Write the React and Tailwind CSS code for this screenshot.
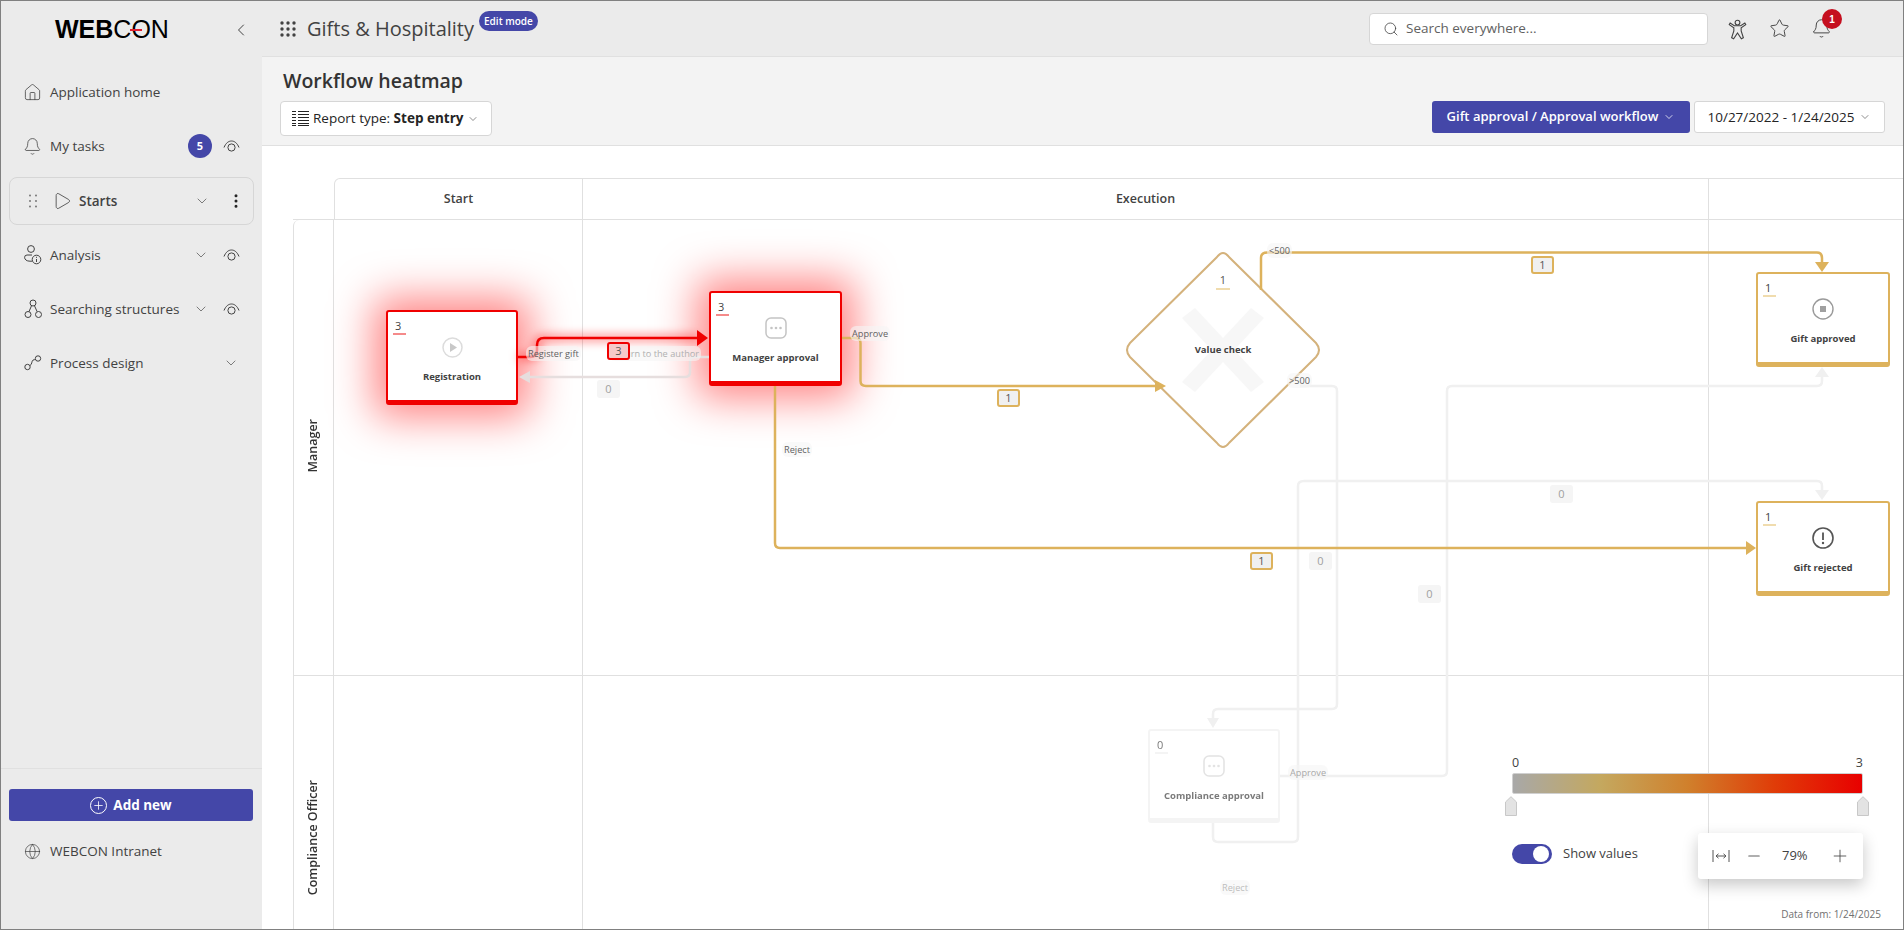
import React from "react";
import { House, Bell, Play, ChevronDown, ChevronLeft, EllipsisVertical, Search, Star, Globe, Plus, Minus } from "lucide-react";

function EyeIcon() {
  return (
    <svg width="17" height="13" viewBox="0 0 17 13" fill="none" stroke="#424242" strokeWidth="1" className="shrink-0">
      <path d="M1 7.5C2.8 3 5.6 1 8.5 1S14.2 3 16 7.5" />
      <circle cx="8.5" cy="7.5" r="3.6" />
    </svg>
  );
}

function AnalysisIcon() {
  return (
    <svg width="18" height="20" viewBox="0 0 18 20" fill="none" stroke="#424242" strokeWidth="1" className="shrink-0">
      <circle cx="7" cy="4" r="3.4" />
      <path d="M8 10H3a2.4 2.4 0 0 0-2.4 2.4c0 2.2 2 3.8 5.4 3.8h2" />
      <circle cx="12.5" cy="14.5" r="4.3" />
      <path d="M12.5 14v3M12.5 11.8v1" />
    </svg>
  );
}

function TreeIcon() {
  return (
    <svg width="18" height="20" viewBox="0 0 18 20" fill="none" stroke="#424242" strokeWidth="1" className="shrink-0">
      <circle cx="9" cy="4" r="3" />
      <circle cx="4" cy="15.5" r="3" />
      <circle cx="14.5" cy="15.5" r="3" />
      <path d="M7.5 6.8 5 12.6M10.5 6.8l2.6 5.8" />
    </svg>
  );
}

function ProcessIcon() {
  return (
    <svg width="18" height="16" viewBox="0 0 18 16" fill="none" stroke="#424242" strokeWidth="1" className="shrink-0">
      <circle cx="3.5" cy="12" r="2.7" />
      <circle cx="14" cy="3.5" r="2.7" />
      <path d="M6 10.5c2-.6 1.6-4.6 3-5.4 1-.5 1.6-.4 2.4-.6" />
    </svg>
  );
}

function DotsGrid({ size, r, color }) {
  const p = [2, 8, 14];
  return (
    <svg width={size} height={size} viewBox="0 0 16 16" fill={color} className="shrink-0">
      {p.map((y) => p.map((x) => <circle key={x + "-" + y} cx={x} cy={y} r={r} />))}
    </svg>
  );
}

function DragDots() {
  return (
    <svg width="8" height="14" viewBox="0 0 8 14" fill="#6b6b6b" className="shrink-0">
      {[1.5, 7, 12.5].map((y) => [1, 7].map((x) => <circle key={x + "-" + y} cx={x} cy={y} r={0.9} />))}
    </svg>
  );
}

function NavRow({ icon, label, right }) {
  return (
    <div className="flex h-[54px] items-center pr-[22px] pl-[22px]">
      <span className="flex w-[19px] justify-center">{icon}</span>
      <span className="ml-[8px] flex-1 text-[13.5px] text-[#424242]">{label}</span>
      {right}
    </div>
  );
}

function Label({ className, children }) {
  return (
    <span className={"absolute rounded-md bg-[#f5f5f5]/60 px-[2px] text-[9.2px] leading-[15px] whitespace-nowrap text-[#616161] " + className}>
      {children}
    </span>
  );
}

function Count({ className, children }) {
  return (
    <span className={"absolute flex h-[18px] w-[23px] items-center justify-center rounded-[3px] text-[11px] text-[#555] " + className}>
      {children}
    </span>
  );
}

function Node({ className, underline, num, icon, label }) {
  return (
    <div className={"absolute flex flex-col items-center rounded-[3px] bg-white " + className}>
      <span className="absolute top-[6px] left-[7px] text-[11px] leading-[15px] text-[#424242]">{num}</span>
      <span className={"absolute top-[21px] left-[5px] h-[2px] w-[13px] " + underline}></span>
      <span className="mt-[24px] flex h-[22px] items-center">{icon}</span>
      <span className="mt-[12px] text-[9.5px] leading-[14px] font-bold whitespace-nowrap text-[#424242]">{label}</span>
    </div>
  );
}

function Dots3({ color }) {
  return (
    <svg width="22" height="22" viewBox="0 0 22 22" fill="none">
      <rect x="1" y="1" width="20" height="20" rx="5" stroke={color} strokeWidth="1.5" />
      <circle cx="6.5" cy="11" r="1.3" fill={color} />
      <circle cx="11" cy="11" r="1.3" fill={color} />
      <circle cx="15.5" cy="11" r="1.3" fill={color} />
    </svg>
  );
}

function Flow() {
  const gold = "#ddb25c";
  const grey = "#f0f0f0";
  return (
    <svg className="absolute top-0 left-0" width="1641" height="783" viewBox="262 146 1641 783" fill="none">
      <defs>
        <filter id="glow" x="-20%" y="-200%" width="140%" height="500%">
          <feGaussianBlur stdDeviation="5" />
        </filter>
      </defs>
      <g stroke={grey} strokeWidth="2.5">
        <path d="M1300 386H1332Q1337 386 1337 391V704Q1337 709 1332 709H1218Q1213 709 1213 714V720" />
        <path d="M1280 776H1442Q1447 776 1447 771V391Q1447 386 1452 386H1817Q1822 386 1822 381V376" />
        <path d="M1213 823V837Q1213 842 1218 842H1293Q1298 842 1298 837V486Q1298 481 1304 481H1817Q1822 481 1822 486V490" />
        <path d="M709 357H695Q690 357 690 362V372Q690 377 685 377H530" stroke="#e6dede" />
      </g>
      <g fill={grey}>
        <polygon points="1207,718 1219,718 1213,728" />
        <polygon points="1815,377 1829,377 1822,367" />
        <polygon points="1815,490 1829,490 1822,500" />
        <polygon points="530,371 530,383 519,377" fill="#e6dede" />
      </g>
      <path
        d="M1217 257Q1223 249 1229 257L1316 343Q1322 350 1316 357L1229 443Q1223 451 1217 443L1130 357Q1124 350 1130 343Z"
        fill="white"
        stroke="#d4b27c"
        strokeWidth="2"
      />
      <polygon points="1182,318 1195,308 1264,382 1251,392" fill="#f7f7f7" />
      <polygon points="1264,318 1251,308 1182,382 1195,392" fill="#f7f7f7" />
      <g stroke={gold} strokeWidth="2.5">
        <path d="M842 338H855Q860.5 338 860.5 343V381Q860.5 386 866 386H1157" />
        <path d="M775 386V543Q775 548 780 548H1747" />
        <path d="M1261 290V258Q1261 252.5 1267 252.5H1817Q1822 252.5 1822 258V262" />
      </g>
      <g fill={gold}>
        <polygon points="1155,380 1166,386 1155,392" />
        <polygon points="1746,541 1756,548 1746,555" />
        <polygon points="1815,262 1829,262 1822,272" />
      </g>
      <path d="M518 357H530Q537 357 537 350V345Q537 338 544 338H698" stroke="#ff0000" strokeOpacity="0.45" strokeWidth="7" filter="url(#glow)" />
      <path d="M518 357H530Q537 357 537 350V345Q537 338 544 338H698" stroke="#f00000" strokeWidth="2.5" />
      <polygon points="697,330 708,338 697,346" fill="#f00000" />
    </svg>
  );
}

export default function App() {
  return (
    <div className="flex h-[930px] w-[1904px] overflow-hidden border border-[#808080] bg-white font-['Open_Sans',sans-serif]">
      <aside className="flex w-[261px] shrink-0 flex-col bg-[#ebebeb]">
        <div className="relative flex h-[56px] items-center pl-[54px]">
          <span className="relative font-['Liberation_Sans',sans-serif] text-[25px] leading-none font-bold text-black">
            WEB<span className="font-normal">CON</span>
            <span className="absolute top-[12px] left-[75px] h-[2px] w-[12px] bg-[#e01f2d]"></span>
          </span>
          <ChevronLeft size={20} strokeWidth={1.2} color="#424242" className="absolute top-[19px] left-[230px]" />
        </div>
        <nav className="mt-[8px] flex flex-1 flex-col">
          <NavRow icon={<House size={19} strokeWidth={1} color="#424242" />} label="Application home" />
          <NavRow
            icon={<Bell size={19} strokeWidth={1} color="#424242" />}
            label="My tasks"
            right={
              <>
                <span className="flex h-[24px] w-[24px] items-center justify-center rounded-full bg-[#4447a8] text-[11px] font-bold text-white">5</span>
                <span className="ml-[11px]"><EyeIcon /></span>
              </>
            }
          />
          <div className="mx-[8px] mt-[4px] flex h-[48px] items-center rounded-[8px] border border-[#d6d6d6] pr-[8px] pl-[19px]">
            <DragDots />
            <Play size={20} strokeWidth={1} color="#424242" className="ml-[15px]" />
            <span className="ml-[7px] flex-1 text-[13.5px] font-semibold text-[#424242]">Starts</span>
            <ChevronDown size={16} strokeWidth={1} color="#424242" />
            <EllipsisVertical size={18} strokeWidth={2} color="#242424" className="ml-[17px]" />
          </div>
          <div className="h-[3px]"></div>
          <NavRow
            icon={<AnalysisIcon />}
            label="Analysis"
            right={<><ChevronDown size={16} strokeWidth={1} color="#424242" /><span className="ml-[14px]"><EyeIcon /></span></>}
          />
          <NavRow
            icon={<TreeIcon />}
            label="Searching structures"
            right={<><ChevronDown size={16} strokeWidth={1} color="#424242" /><span className="ml-[14px]"><EyeIcon /></span></>}
          />
          <NavRow
            icon={<ProcessIcon />}
            label="Process design"
            right={<span className="mr-[1px]"><ChevronDown size={16} strokeWidth={1} color="#424242" /></span>}
          />
        </nav>
        <div className="h-[161px] border-t border-[#e0e0e0] pt-[20px]">
          <button className="mx-[8px] flex h-[32px] w-[244px] items-center justify-center gap-[6px] rounded-[3px] bg-[#4447a8] text-[13.5px] font-bold text-white">
            <span className="flex h-[17px] w-[17px] items-center justify-center rounded-full border border-white"><Plus size={13} strokeWidth={1.5} /></span>
            Add new
          </button>
          <div className="mt-[14px] flex h-[32px] items-center pl-[23px]">
            <Globe size={17} strokeWidth={1} color="#424242" />
            <span className="ml-[9px] text-[13.5px] text-[#424242]">WEBCON Intranet</span>
          </div>
        </div>
      </aside>

      <main className="flex min-w-0 flex-1 flex-col">
        <header className="flex h-[56px] shrink-0 items-center border-b border-[#e0e0e0] bg-[#ebebeb] pr-[71px] pl-[18px]">
          <DotsGrid size={16} r={1.7} color="#424242" />
          <span className="ml-[11px] text-[20px] text-[#424242]">Gifts &amp; Hospitality</span>
          <span className="mb-[16px] ml-[5px] rounded-full bg-[#4447a8] px-[5px] text-[10px] leading-[20px] font-semibold text-white">Edit mode</span>
          <div className="ml-auto flex h-[32px] w-[339px] items-center rounded-[4px] border border-[#d6d6d6] bg-white pl-[13px]">
            <Search size={16} strokeWidth={1.2} color="#424242" />
            <span className="ml-[7px] text-[13.5px] text-[#616161]">Search everywhere...</span>
          </div>
          <svg width="19" height="22" viewBox="0 0 20 24" fill="none" stroke="#424242" strokeWidth="1.2" className="ml-[20px]">
            <circle cx="10" cy="5" r="2.6" />
            <path d="M2 5.5 1 7.2l5 3.6v3.4L3.6 21.5l2.2 1.2 4.2-6.4 4.2 6.4 2.2-1.2L14 14.2v-3.4l5-3.6L18 5.5l-4.5 3H6.5Z" />
          </svg>
          <Star size={21} strokeWidth={1.1} color="#424242" className="ml-[22px]" />
          <span className="relative ml-[21px] flex">
            <Bell size={21} strokeWidth={1.1} color="#424242" />
            <span className="absolute top-[-9px] left-[11px] flex h-[20px] w-[20px] items-center justify-center rounded-full bg-[#c50f1f] font-['Liberation_Sans',sans-serif] text-[10px] font-bold text-white">1</span>
          </span>
        </header>

        <section className="relative h-[89px] shrink-0 border-b border-[#e0e0e0] bg-[#f3f3f3]">
          <h1 className="absolute top-[10px] left-[21px] text-[19.5px] leading-[27px] font-semibold text-[#333]">Workflow heatmap</h1>
          <div className="flex h-full items-end justify-between pr-[18px] pb-[9px] pl-[18px]">
            <button className="flex h-[35px] w-[212px] items-center rounded-[4px] border border-[#d6d6d6] bg-white pl-[11px] text-[13.5px] text-[#242424]">
              <svg width="17" height="15" viewBox="0 0 17 15" stroke="#242424" strokeWidth="1" fill="none">
                <path d="M0 .5h4M6 .5h11M0 3.5h4M6 3.5h11M0 6.5h4M6 6.5h11M0 9.5h4M6 9.5h11M0 12.5h4M6 12.5h11M0 14.5h4M6 14.5h11" />
              </svg>
              <span className="ml-[4px]">Report type: <b className="font-bold">Step entry</b></span>
              <ChevronDown size={12} strokeWidth={1.2} color="#424242" className="ml-[4px]" />
            </button>
            <div className="mb-[3px] flex items-center gap-[4px]">
              <button className="flex h-[32px] w-[258px] items-center justify-center gap-[5px] rounded-[3px] bg-[#4447a8] text-[13px] font-semibold text-white">
                Gift approval / Approval workflow
                <ChevronDown size={12} strokeWidth={1.5} />
              </button>
              <button className="flex h-[32px] w-[191px] items-center justify-center gap-[5px] rounded-[3px] border border-[#d6d6d6] bg-white text-[13.5px] text-[#242424]">
                10/27/2022 - 1/24/2025
                <ChevronDown size={12} strokeWidth={1.2} color="#424242" />
              </button>
            </div>
          </div>
        </section>

        <section className="relative min-h-0 flex-1 overflow-hidden bg-white">
          <div className="flex flex-col pt-[32px] pl-[31px]">
            <div className="ml-[41px] flex h-[41px]">
              <div className="flex w-[249px] items-center justify-center rounded-tl-[6px] border-t border-r border-l border-[#e0e0e0] text-[12.5px] font-semibold text-[#424242]">Start</div>
              <div className="flex w-[1126px] items-center justify-center border-t border-r border-[#e0e0e0] text-[12.5px] font-semibold text-[#424242]">Execution</div>
              <div className="flex-1 border-t border-[#e0e0e0]"></div>
            </div>
            <div className="flex h-[457px] border-t border-b border-[#e0e0e0]">
              <div className="flex w-[41px] items-center justify-center rounded-tl-[6px] border-r border-l border-[#e0e0e0] pb-[3px]">
                <span className="rotate-180 text-[12.5px] font-semibold text-[#333] [writing-mode:vertical-rl]">Manager</span>
              </div>
              <div className="w-[249px] border-r border-[#e0e0e0]"></div>
              <div className="w-[1126px] border-r border-[#e0e0e0]"></div>
              <div className="flex-1"></div>
            </div>
            <div className="flex h-[324px]">
              <div className="flex w-[41px] items-center justify-center border-r border-l border-[#e0e0e0]">
                <span className="rotate-180 text-[12.5px] font-semibold whitespace-nowrap text-[#333] [writing-mode:vertical-rl]">Compliance Officer</span>
              </div>
              <div className="w-[249px] border-r border-[#e0e0e0]"></div>
              <div className="w-[1126px] border-r border-[#e0e0e0]"></div>
              <div className="flex-1"></div>
            </div>
          </div>

          <Node
            className="top-[164px] left-[124px] h-[95px] w-[132px] border-2 border-b-[5px] border-[#f00000] shadow-[0_0_42px_12px_rgba(255,20,20,0.52)]"
            underline="bg-[#f58a8a]"
            num="3"
            label="Registration"
            icon={
              <svg width="21" height="21" viewBox="0 0 21 21" fill="none">
                <circle cx="10.5" cy="10.5" r="9.5" stroke="#dcdcdc" strokeWidth="1.5" />
                <polygon points="8,6 15,10.5 8,15" fill="#c8c8c8" />
              </svg>
            }
          />
          <Node
            className="top-[145px] left-[447px] h-[95px] w-[133px] border-2 border-b-[5px] border-[#f00000] shadow-[0_0_42px_12px_rgba(255,20,20,0.52)]"
            underline="bg-[#f58a8a]"
            num="3"
            label="Manager approval"
            icon={<Dots3 color="#c4c4c4" />}
          />

          <Flow />

          <Node
            className="top-[126px] left-[1494px] h-[95px] w-[134px] border-2 border-b-[5px] border-[#ddb25c]"
            underline="bg-[#f0dcae]"
            num="1"
            label="Gift approved"
            icon={
              <svg width="22" height="22" viewBox="0 0 22 22" fill="none">
                <circle cx="11" cy="11" r="10" stroke="#9a9a9a" strokeWidth="1.4" />
                <rect x="8" y="8" width="6" height="6" fill="#a0a0a0" />
              </svg>
            }
          />
          <Node
            className="top-[355px] left-[1494px] h-[95px] w-[134px] border-2 border-b-[5px] border-[#ddb25c]"
            underline="bg-[#f0dcae]"
            num="1"
            label="Gift rejected"
            icon={
              <svg width="22" height="22" viewBox="0 0 22 22" fill="none">
                <circle cx="11" cy="11" r="10" stroke="#555" strokeWidth="1.6" />
                <path d="M11 5.5v7.5" stroke="#555" strokeWidth="1.8" />
                <circle cx="11" cy="16" r="1.2" fill="#555" />
              </svg>
            }
          />
          <Node
            className="top-[583px] left-[886px] h-[94px] w-[132px] border-2 border-b-[5px] border-[#f0f0f0] opacity-70"
            underline="bg-[#f0f0f0]"
            num="0"
            label="Compliance approval"
            icon={<Dots3 color="#d8d8d8" />}
          />

          <div className="absolute top-[126px] left-[911px] flex w-[100px] justify-center text-[11px] leading-[15px] text-[#555]">1</div>
          <span className="absolute top-[142px] left-[954px] h-[2px] w-[14px] bg-[#f0dcae]"></span>
          <div className="absolute top-[197px] left-[911px] w-[100px] text-center text-[9.5px] leading-[14px] font-bold text-[#424242]">Value check</div>

          <Label className="top-[200px] left-[264px]">Register gift</Label>
          <Label className="top-[200px] left-[347px] text-[#b0b0b0]">Return to the author</Label>
          <Label className="top-[180px] left-[588px]">Approve</Label>
          <Label className="top-[296px] left-[520px]">Reject</Label>
          <Label className="top-[97px] left-[1005px]">&lt;500</Label>
          <Label className="top-[227px] left-[1025px] text-[#9a9a9a]">&gt;500</Label>
          <Label className="top-[619px] left-[1026px] text-[#a8a8a8]">Approve</Label>
          <Label className="top-[734px] left-[958px] text-[#bdbdbd]">Reject</Label>

          <Count className="top-[196px] left-[345px] border-2 border-[#f00000] bg-[#f6c9c9]">3</Count>
          <Count className="top-[234px] left-[335px] bg-[#f5f5f5] text-[#a0a0a0]">0</Count>
          <Count className="top-[110px] left-[1269px] border-2 border-[#ddb25c] bg-[#f0f0f0]">1</Count>
          <Count className="top-[243px] left-[735px] border-2 border-[#ddb25c] bg-[#f0f0f0]">1</Count>
          <Count className="top-[406px] left-[988px] border-2 border-[#ddb25c] bg-[#f0f0f0]">1</Count>
          <Count className="top-[406px] left-[1047px] bg-[#f5f5f5] text-[#a0a0a0]">0</Count>
          <Count className="top-[439px] left-[1156px] bg-[#f5f5f5] text-[#a0a0a0]">0</Count>
          <Count className="top-[339px] left-[1288px] bg-[#f5f5f5] text-[#a0a0a0]">0</Count>

          <div className="absolute top-[608px] left-[1250px] w-[351px]">
            <div className="flex justify-between text-[12.5px] leading-[18px] text-[#424242]">
              <span>0</span>
              <span>3</span>
            </div>
            <div className="mt-[1px] h-[21px] rounded-[2px] border border-[#d0d0d0] bg-[linear-gradient(90deg,#a8a8a8_0%,#c4a85f_25%,#d0802c_50%,#e03c08_75%,#e80000_100%)]"></div>
            <div className="mt-[2px] flex justify-between">
              <svg width="12" height="20" viewBox="0 0 12 20" className="ml-[-7px]"><path d="M.5 6 6 .7 11.5 6v13.5H.5Z" fill="#e3e3e3" stroke="#c8c8c8" /></svg>
              <svg width="12" height="20" viewBox="0 0 12 20" className="mr-[-6px]"><path d="M.5 6 6 .7 11.5 6v13.5H.5Z" fill="#e3e3e3" stroke="#c8c8c8" /></svg>
            </div>
          </div>

          <div className="absolute top-[698px] left-[1250px] flex items-center">
            <span className="flex h-[20px] w-[40px] items-center justify-end rounded-full bg-[#4447a8] pr-[3px]">
              <span className="h-[16px] w-[16px] rounded-full bg-white"></span>
            </span>
            <span className="ml-[11px] text-[13px] text-[#424242]">Show values</span>
          </div>

          <div className="absolute top-[687px] left-[1436px] flex h-[46px] w-[165px] items-center rounded-[3px] bg-white pl-[14px] shadow-[0_6px_16px_rgba(0,0,0,0.22)]">
            <svg width="18" height="14" viewBox="0 0 18 14" fill="none" stroke="#555" strokeWidth="1">
              <path d="M1 1v12M17 1v12M4 7h10M4 7l2.5-2.2M4 7l2.5 2.2M14 7l-2.5-2.2M14 7l-2.5 2.2" />
            </svg>
            <Minus size={18} strokeWidth={1.4} color="#616161" className="ml-[15px]" />
            <span className="ml-[19px] w-[30px] text-[13px] text-[#424242]">79%</span>
            <Plus size={20} strokeWidth={1} color="#424242" className="ml-[18px]" />
          </div>

          <div className="absolute right-[22px] bottom-[7px] text-[10px] leading-[16px] text-[#707070]">Data from: 1/24/2025</div>
        </section>
      </main>
    </div>
  );
}
